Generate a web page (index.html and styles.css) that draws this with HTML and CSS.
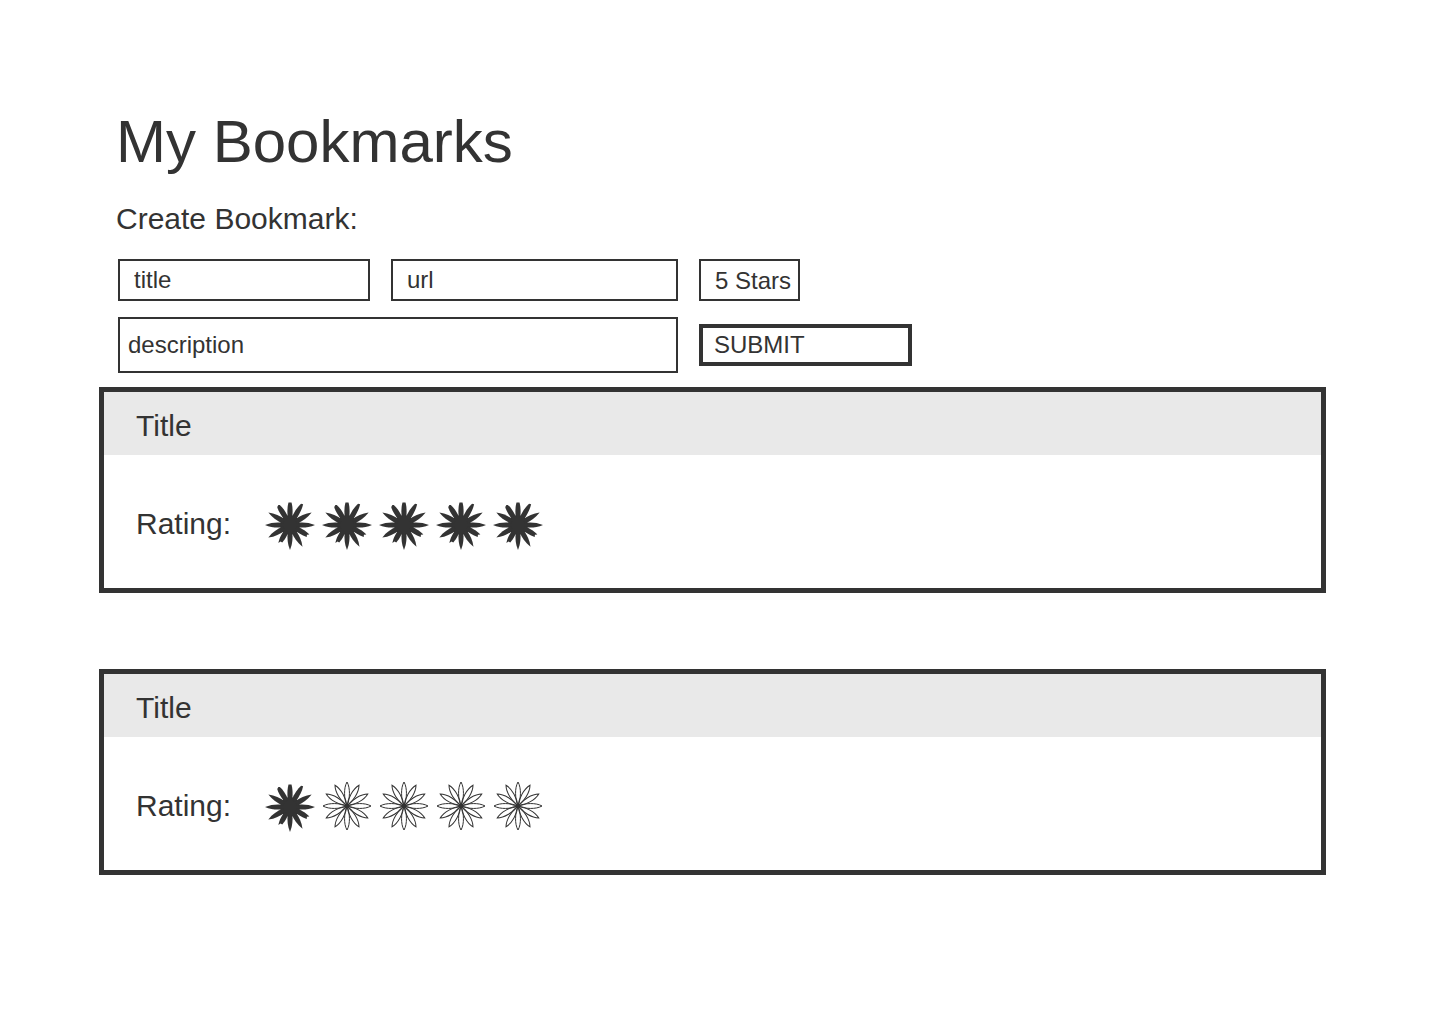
FILE: index.html
```html
<!DOCTYPE html>
<html lang="en">
<head>
<meta charset="utf-8">
<meta name="viewport" content="width=device-width, initial-scale=1">
<title>My Bookmarks</title>
<link rel="stylesheet" href="styles.css">
</head>
<body>
<svg class="sprite" aria-hidden="true">
  <symbol id="star-full" viewBox="-25 -26 50 52">
    <circle r="10"/>
    <path id="leaf" d="M-2.200-7C-3-13-2.500-19 0-25C2.500-19 3-13 2.200-7Z" transform="rotate(90)"/>
    <use href="#leaf" transform="rotate(90)"/>
    <use href="#leaf" transform="rotate(180)"/>
    <use href="#leaf" transform="rotate(-30)"/>
    <use href="#leaf" transform="rotate(-150)"/>
    <use href="#leaf" transform="rotate(150)"/>
    <use href="#leaf" transform="rotate(60)"/>
    <path d="M-2.200-7C-3-14-2.500-19-1.500-22.500H1.500C2.500-19 3-14 2.200-7Z"/>
    <path d="M-2.200-7C-3-14-3-19-2-22L0-23.200L1.200-22.500C2.500-19 3-14 2.200-7Z" transform="rotate(-30)"/>
    <path d="M-2.200-7C-3-14-2.500-20-1-24L1-24.500C2.500-20 3-14 2.200-7Z" transform="rotate(30)"/>
    <path d="M-2.200-7C-3-14-2.500-17-1.500-21.500L0-19.500L2-20.500C2.500-17 3-14 2.200-7Z" transform="rotate(120)"/>
    <path d="M-2.200-7C-3-14-2.500-16-2-19L0-19L1-21.500C2.500-17 3-14 2.200-7Z" transform="rotate(210)"/>
  </symbol>
  <symbol id="star-empty" viewBox="-25 -25 50 50">
    <g id="cross">
      <path id="petal" d="M0 0C-3-7-3.500-18 0-24C3.500-18 3-7 0 0Z"/>
      <use href="#petal" transform="rotate(90)"/>
      <use href="#petal" transform="rotate(180)"/>
      <use href="#petal" transform="rotate(270)"/>
    </g>
    <use href="#cross" transform="rotate(30)"/>
    <use href="#cross" transform="rotate(60)"/>
  </symbol>
</svg>

<main class="page">
  <h1 class="page-title">My Bookmarks</h1>

  <form class="create">
    <h2 class="create-title">Create Bookmark:</h2>
    <div class="fields">
      <input class="field" type="text" name="title" placeholder="title" aria-label="title">
      <input class="field" type="text" name="url" placeholder="url" aria-label="url">
      <select class="field stars-select" name="rating" aria-label="Rating">
        <option>5 Stars</option>
        <option>4 Stars</option>
        <option>3 Stars</option>
        <option>2 Stars</option>
        <option>1 Star</option>
      </select>
      <input class="field description" type="text" name="description" placeholder="description" aria-label="description">
      <button class="submit" type="submit">SUBMIT</button>
    </div>
  </form>

  <section class="bookmarks">
    <article class="bookmark">
      <h3 class="bookmark-title">Title</h3>
      <div class="bookmark-body">
        <span class="label">Rating:</span>
        <div class="stars" role="img" aria-label="5 of 5">
          <svg class="star full"><use href="#star-full"/></svg>
          <svg class="star full"><use href="#star-full"/></svg>
          <svg class="star full"><use href="#star-full"/></svg>
          <svg class="star full"><use href="#star-full"/></svg>
          <svg class="star full"><use href="#star-full"/></svg>
        </div>
      </div>
    </article>
    <article class="bookmark">
      <h3 class="bookmark-title">Title</h3>
      <div class="bookmark-body">
        <span class="label">Rating:</span>
        <div class="stars" role="img" aria-label="1 of 5">
          <svg class="star full"><use href="#star-full"/></svg>
          <svg class="star empty"><use href="#star-empty"/></svg>
          <svg class="star empty"><use href="#star-empty"/></svg>
          <svg class="star empty"><use href="#star-empty"/></svg>
          <svg class="star empty"><use href="#star-empty"/></svg>
        </div>
      </div>
    </article>
  </section>
</main>
</body>
</html>
```
FILE: styles.css
```css
* {
  box-sizing: border-box;
}

body {
  margin: 0;
  background: #fff;
  color: #333;
  font-family: "Liberation Sans", Arial, Helvetica, sans-serif;
  font-size: 30px;
}

.sprite {
  position: absolute;
  width: 0;
  height: 0;
}

.page {
  padding: 104px 114px 80px 99px;
}

.page-title,
.create-title,
.bookmark-title {
  margin: 0;
  font-weight: 400;
}

.page-title {
  padding-left: 17px;
  font-size: 60px;
  line-height: 76px;
}

.create {
  padding: 21px 0 14px 17px;
}

.create-title {
  font-size: 30px;
  line-height: 36px;
}

.fields {
  display: grid;
  grid-template-columns: 252px 287px 213px;
  gap: 16px 21px;
  align-items: center;
  padding: 22px 0 0 2px;
}

.field,
.submit {
  width: 100%;
  height: 42px;
  margin: 0;
  padding: 0 14px;
  border: 2px solid #333;
  border-radius: 0;
  background: #fff;
  color: #333;
  font-family: inherit;
  font-size: 24px;
  text-align: left;
}

.field::placeholder {
  color: #333;
  opacity: 1;
}

.stars-select {
  width: 101px;
  padding-right: 0;
  appearance: none;
}

.description {
  grid-column: span 2;
  height: 56px;
  padding: 0 8px;
}

.submit {
  padding: 0 11px;
  border-width: 4px;
}

.bookmarks {
  display: grid;
  gap: 76px;
}

.bookmark {
  border: 5px solid #333;
}

.bookmark-title {
  padding: 16px 32px 11px;
  background: #e9e9e9;
  font-size: 30px;
  line-height: 36px;
}

.bookmark-body {
  display: flex;
  align-items: center;
  gap: 34px;
  min-height: 133px;
  padding: 4px 32px 0;
}

.stars {
  display: flex;
  gap: 7px;
  padding-top: 3px;
}

.star {
  width: 50px;
  height: 50px;
}

.full {
  height: 52px;
  fill: #333;
}

.empty {
  fill: none;
  stroke: #333;
  stroke-width: 1px;
}
```
